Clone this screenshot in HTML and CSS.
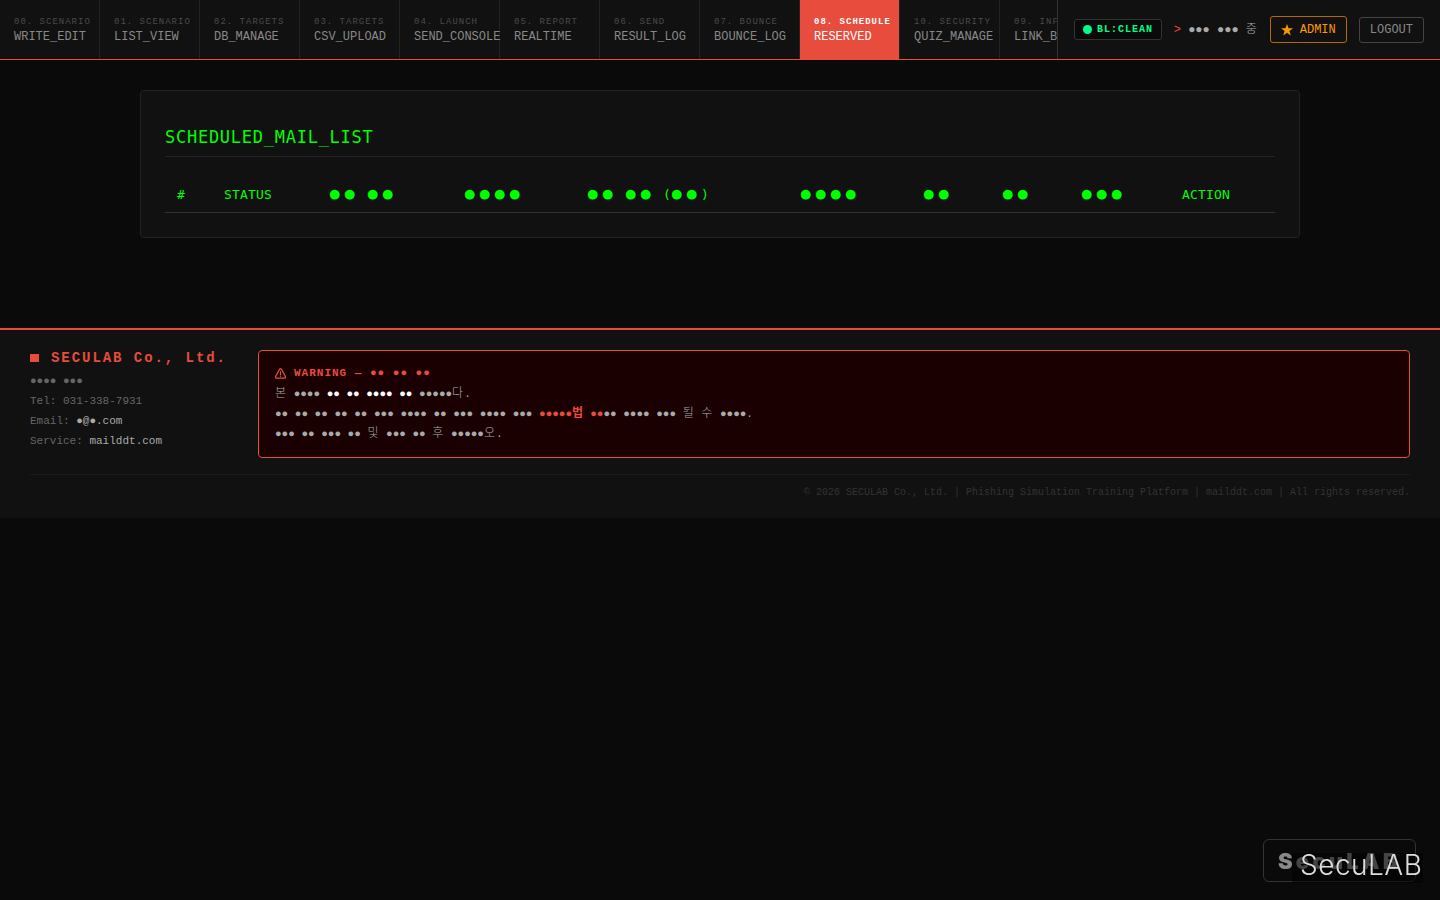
FILE: index.html
```
<!DOCTYPE html>
<html lang="ko">
<head>
    <meta charset="UTF-8">
    <meta name="viewport" content="width=device-width, initial-scale=1.0">
    <title>SCHEDULED_MAIL_LIST</title>
    <link rel="stylesheet" href="styles.css">
</head>
<body>

<nav class="navbar">
    <div class="nav-menu">
        <a class="nav-item"><small>00. SCENARIO</small><span>WRITE_EDIT</span></a>
        <a class="nav-item"><small>01. SCENARIO</small><span>LIST_VIEW</span></a>
        <a class="nav-item"><small>02. TARGETS</small><span>DB_MANAGE</span></a>
        <a class="nav-item"><small>03. TARGETS</small><span>CSV_UPLOAD</span></a>
        <a class="nav-item"><small>04. LAUNCH</small><span>SEND_CONSOLE</span></a>
        <a class="nav-item"><small>05. REPORT</small><span>REALTIME</span></a>
        <a class="nav-item"><small>06. SEND</small><span>RESULT_LOG</span></a>
        <a class="nav-item"><small>07. BOUNCE</small><span>BOUNCE_LOG</span></a>
        <a class="nav-item active"><small>08. SCHEDULE</small><span>RESERVED</span></a>
        <a class="nav-item"><small>10. SECURITY</small><span>QUIZ_MANAGE</span></a>
        <a class="nav-item"><small>09. INFRA</small><span>LINK_BLOCK</span></a>
    </div>
    <div class="nav-right">
        <div class="bl-badge"><i class="bl-dot"></i>BL:CLEAN</div>
        <div class="user"><b>&gt;</b> ●●● ●●● <span class="ko">중</span></div>
        <a class="btn btn-admin">
            <svg width="12" height="12" viewBox="0 0 12 12"><path fill="currentColor" d="M6 0l1.5 4.3H12L8.4 7 9.8 11.6 6 8.8 2.2 11.6 3.6 7 0 4.3h4.5z"/></svg>
            ADMIN
        </a>
        <a class="btn">LOGOUT</a>
    </div>
</nav>

<main class="container">
    <div class="card">
        <h2>SCHEDULED_MAIL_LIST</h2>
        <table>
            <colgroup>
                <col class="c-no"><col class="c-status"><col class="c-name"><col class="c-from"><col class="c-time">
                <col class="c-scenario"><col class="c-count"><col class="c-count"><col class="c-user"><col>
            </colgroup>
            <thead>
                <tr>
                    <th>#</th>
                    <th>STATUS</th>
                    <th><span class="dots">●●</span> <span class="dots">●●</span></th>
                    <th><span class="dots">●●●●</span></th>
                    <th><span class="dots">●●</span> <span class="dots">●●</span> (<span class="dots">●●</span>)</th>
                    <th><span class="dots">●●●●</span></th>
                    <th><span class="dots">●●</span></th>
                    <th><span class="dots">●●</span></th>
                    <th><span class="dots">●●●</span></th>
                    <th>ACTION</th>
                </tr>
            </thead>
        </table>
    </div>
</main>

<footer class="footer">
    <div class="footer-main">
        <div class="company">
            <div class="company-name"><i class="square"></i>SECULAB Co., Ltd.</div>
            <div>●●●● ●●●</div>
            <div>Tel: 031-338-7931</div>
            <div>Email: <span class="val">●@●.com</span></div>
            <div>Service: <span class="val">mailddt.com</span></div>
        </div>
        <div class="warning">
            <div class="warning-title">
                <svg width="11" height="11" viewBox="0 0 11 11" fill="none" stroke="currentColor" stroke-linejoin="round" stroke-linecap="round"><path stroke-width="1.3" d="M4.6 1.3Q5.5.1 6.4 1.3L10.2 8Q10.8 10.2 9.3 10.2H1.7Q.2 10.2 .8 8z"/><path stroke-width="1.2" d="M5.5 3.5v3M5.5 8.2v.1"/></svg>
                WARNING — ●● ●● ●●
            </div>
            <div><span class="ko">본</span> ●●●● <b>●● ●● ●●●● ●●</b> ●●●●●<span class="ko">다</span>.</div>
            <div>●● ●● ●● ●● ●● ●●● ●●●● ●● ●●● ●●●● ●●● <em>●●●●●<span class="ko">법</span> ●●</em>●● ●●●● ●●● <span class="ko">될</span> <span class="ko">수</span> ●●●●.</div>
            <div>●●● ●● ●●● ●● <span class="ko">및</span> ●●● ●● <span class="ko">후</span> ●●●●●<span class="ko">오</span>.</div>
        </div>
    </div>
    <div class="copyright">© 2026 SECULAB Co., Ltd. | Phishing Simulation Training Platform | mailddt.com | All rights reserved.</div>
</footer>

<!-- Floating brand mark -->
<div class="brand-box">SecuLAB</div>
<div class="brand-label">SecuLAB</div>

</body>
</html>
```
FILE: styles.css
```
* { box-sizing: border-box; }
body { margin: 0; height: 900px; overflow: hidden; background: #0a0a0a; color: #aaa; font-family: "Liberation Mono", "Noto Sans CJK KR", monospace; font-size: 12px; }
.ko { font-family: "Noto Sans CJK KR", sans-serif; font-size: 12px; font-weight: 300; line-height: 1; letter-spacing: 1px; }

/* Navbar */
.navbar { display: flex; height: 60px; background: #111; border-bottom: 1px solid #e74c3c; }
.nav-menu { display: flex; flex: 1; min-width: 0; overflow: hidden; }
.nav-item { display: flex; flex-direction: column; justify-content: center; flex: 0 0 100px; min-width: 0; padding: 0 0 0 14px; border-right: 1px solid #222; color: #888; line-height: 15px; white-space: nowrap; }
.nav-item small { font-size: 9px; letter-spacing: 1px; color: #4a4a4a; }
.nav-item.active { background: #e74c3c; color: #fff; }
.nav-item.active small { color: #fff; font-weight: bold; }
.nav-right { display: flex; align-items: center; gap: 12px; width: 383px; padding: 0 16px; border-left: 1px solid #333; white-space: nowrap; }
.bl-badge { display: flex; align-items: center; width: 88px; height: 21px; padding-left: 8px; border: 1px solid #333; border-radius: 3px; background: #0a0a0a; color: #00ff88; font-size: 10px; font-weight: bold; letter-spacing: 1px; }
.bl-dot { width: 9px; height: 9px; margin-right: 5px; border-radius: 50%; background: #00ff88; }
.user { width: 84px; }
.user b { color: #e74c3c; font-weight: normal; }
.btn { display: flex; align-items: center; height: 26px; padding: 0 10px; border: 1px solid #444; border-radius: 3px; color: #888; }
.btn-admin { height: 27px; gap: 7px; border-color: #b36b00; color: #ff9800; }

/* Card and table */
.container { width: 1160px; margin: 30px auto 90px; }
.card { height: 148px; padding: 24px; border: 1px solid #222; border-radius: 4px; background: #111; color: #0f0; font-family: "DejaVu Sans Mono", monospace; }
.card h2 { height: 42px; margin: 0 0 20px; padding-top: 12px; border-bottom: 1px solid #222; font-size: 17px; font-weight: normal; line-height: 21px; letter-spacing: 0.74px; }
table { width: 100%; table-layout: fixed; border-collapse: separate; border-spacing: 0; }
th { height: 36px; padding: 0 0 0 12px; border-bottom: 1px solid #333; text-align: left; font-size: 13px; font-weight: normal; line-height: 20px; letter-spacing: 0.17px; white-space: nowrap; }
.dots { margin: 0 1px 0 -1px; font-family: "Liberation Mono", monospace; font-size: 22.5px; line-height: 10px; letter-spacing: 1.5px; vertical-align: -2px; }
.c-no { width: 47px; }
.c-status { width: 105px; }
.c-name { width: 135px; }
.c-from { width: 123px; }
.c-time { width: 213px; }
.c-scenario { width: 123px; }
.c-count { width: 79px; }
.c-user { width: 101px; }

/* Footer */
.footer { height: 190px; padding: 20px 30px; border-top: 2px solid #e74c3c; background: #111; font-size: 11px; line-height: 20px; }
.footer-main { display: flex; height: 108px; }
.company { width: 228px; color: #666; }
.company-name { display: flex; align-items: center; height: 16px; margin-bottom: 5px; color: #e74c3c; font-size: 14px; font-weight: bold; letter-spacing: 1.95px; white-space: nowrap; }
.square { width: 9px; height: 8px; margin-right: 12px; background: #e74c3c; }
.val { color: #aaa; }
.warning { flex: 1; padding: 12px 16px; border: 1px solid #e74c3c; border-radius: 4px; background: #1a0000; white-space: nowrap; }
.warning > div { height: 20px; }
.warning b { color: #fff; }
.warning em { color: #e74c3c; font-style: normal; font-weight: bold; }
.warning em .ko { font-weight: bold; letter-spacing: 0.5px; }
.warning .warning-title { display: flex; align-items: center; gap: 8px; margin-bottom: 1px; color: #e74c3c; font-weight: bold; letter-spacing: 1px; }
.copyright { margin-top: 16px; padding-top: 8px; border-top: 1px solid #1a1a1a; color: #333; font-size: 10px; text-align: right; }

/* Brand mark over the page */
.brand-box { position: fixed; left: 1263px; top: 839px; width: 153px; height: 43px; padding-left: 14px; border: 1px solid #333; border-radius: 6px; color: #888; font: 900 22px/42px Inter, sans-serif; letter-spacing: 3.2px; }
.brand-label { position: fixed; left: 1292px; top: 853px; width: 131px; height: 30px; padding-left: 8px; background: rgba(0, 0, 0, 0.5); color: #ddd; font: 300 28px/24px Inter, sans-serif; letter-spacing: 0.5px; }
```
